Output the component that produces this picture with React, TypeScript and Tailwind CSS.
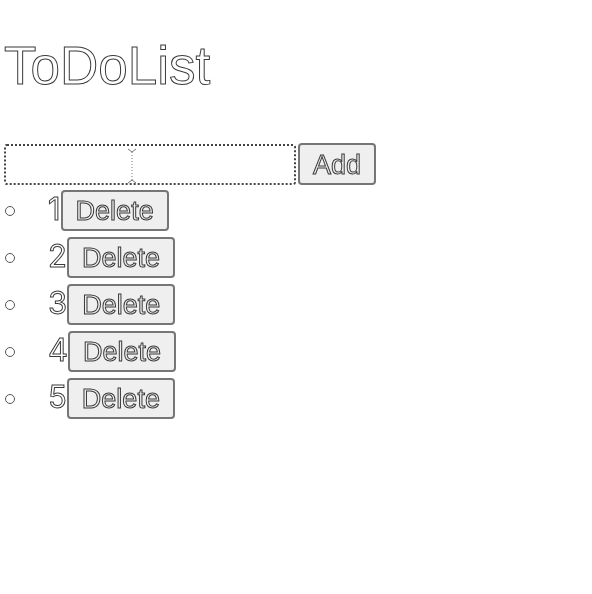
import { useState } from "react";

const outline = "text-transparent [-webkit-text-stroke:1px_#3a3a3a]";

export default function App() {
  const [todos, setTodos] = useState<string[]>(["1", "2", "3", "4", "5"]);
  const [text, setText] = useState("");

  const add = () => {
    if (!text.trim()) return;
    setTodos([...todos, text]);
    setText("");
  };

  return (
    <div className="min-h-[594px] bg-white pl-[4px] pt-[38px] font-['Liberation_Sans',Arial,sans-serif] will-change-transform">
      <h1 className={`text-[53px] leading-[56px] font-normal ${outline}`}>ToDoList</h1>

      <div className="mt-[49px] flex items-center gap-[2px]">
        <div className="relative">
          <input
            value={text}
            onChange={(e) => setText(e.target.value)}
            className="h-[41px] w-[292px] rounded-[3px] border-2 border-dotted border-[#444] bg-white px-2 text-[26px] outline-none"
          />
          <svg
            className="pointer-events-none absolute left-[121px] top-[4px]"
            width="14"
            height="36"
            viewBox="0 0 14 36"
            fill="none"
            stroke="#777"
            strokeWidth="1"
          >
            <path d="M3 1 L7 4 L11 1" />
            <path d="M7 4 V32" strokeDasharray="1 2" />
            <path d="M3 35 L7 32 L11 35" />
          </svg>
        </div>
        <button
          onClick={add}
          className={`h-[42px] rounded-[4px] border-2 border-[#767676] bg-[#efefef] px-[13px] text-[27px] ${outline}`}
        >
          Add
        </button>
      </div>

      <ul className="mt-[2px]">
        {todos.map((t, i) => (
          <li key={i} className="flex h-[47px] items-center">
            <span className="ml-[1px] h-[10px] w-[10px] rounded-full border border-[#555]" />
            <span className={`mb-[4px] ml-[33px] font-['Inter',sans-serif] text-[31px] leading-[36px] ${outline}`}>{t}</span>
            <button
              onClick={() => setTodos(todos.filter((_, j) => j !== i))}
              className={`h-[41px] rounded-[4px] border-2 border-[#767676] bg-[#efefef] px-[13px] text-[27px] leading-[30px] ${outline}`}
            >
              Delete
            </button>
          </li>
        ))}
      </ul>
    </div>
  );
}
